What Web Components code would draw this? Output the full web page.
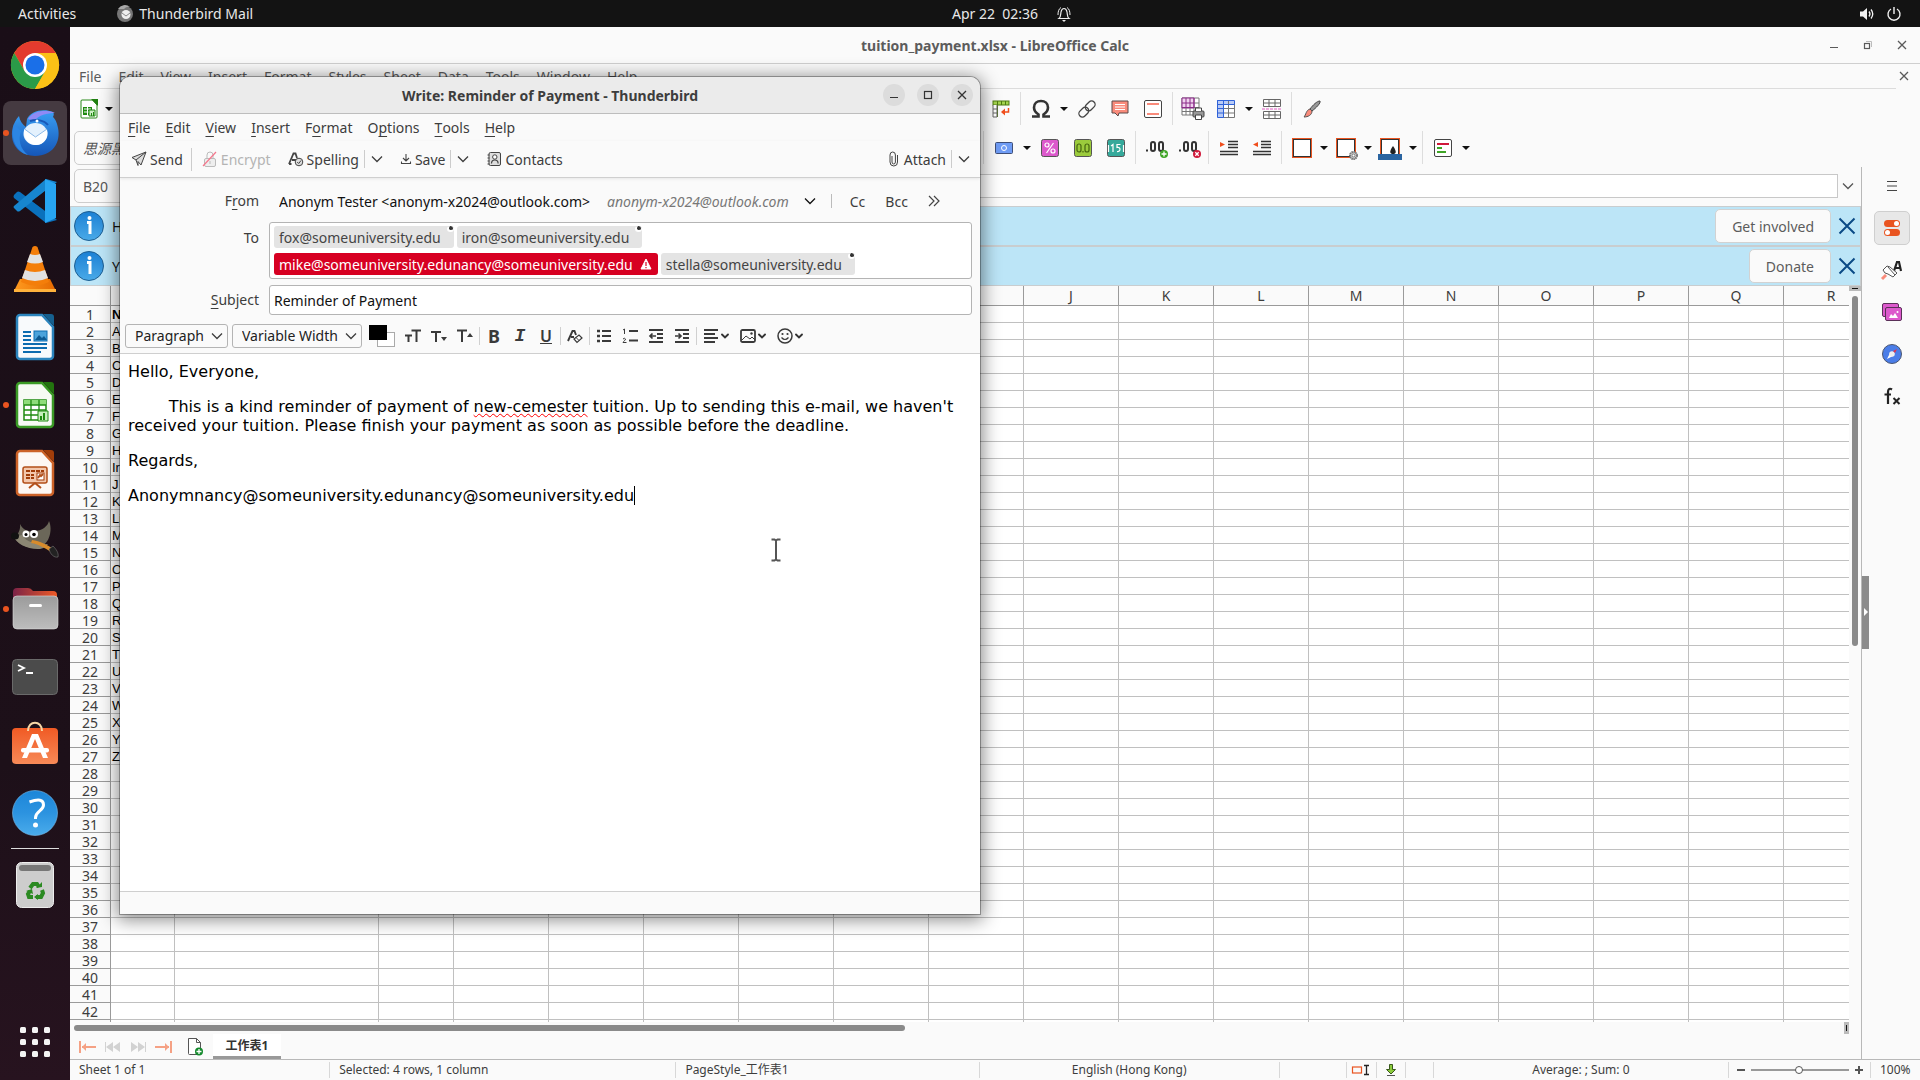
<!DOCTYPE html>
<html lang="en">
<head>
<meta charset="utf-8">
<title>Desktop</title>
<style>
  html, body {
    margin: 0;
    height: 100%;
  }
  body {
    font-family: "Noto Sans", "Noto Sans CJK TC", sans-serif;
    font-size: 14px;
    color: #3d3d3d;
    overflow: hidden;
  }
</style>
</head>
<body>
<desk-top></desk-top>

<script>
// icons: name -> [width, height, svg markup]
const ICONS = {
  // top bar
  tbsmall: [18, 18, `<circle cx="9" cy="9" r="8" fill="#777"/><path d="M2 4a8 8 0 0 1 12-2 6 6 0 0 0-6 2z" fill="#aaa"/><circle cx="10" cy="9.500" r="4.500" fill="#eee"/><path d="M6 8l4 3 4-3" fill="none" stroke="#888"/>`],
  bell: [16, 16, `<path d="M3 12.500c2-1.500 1.500-4 2-6.500C5.500 3.500 6.500 2.500 8 2.500s2.500 1 3 3.500c.5 2.500 0 5 2 6.500z" fill="none" stroke="#eee" stroke-width="1.200"/><path d="M2 9c0-3 .5-6 3-7.500M14 9c0-3-.5-6-3-7.500" fill="none" stroke="#eee"/><path d="M6 14h4l-2 2z" fill="#eee"/>`],
  sound: [16, 16, `<path d="M1 5.500h3L8 2v12l-4-3.500H1z" fill="#f2f2f2"/><path d="M10 5.500q2 2.500 0 5M12 3.500q3.500 4.500 0 9" fill="none" stroke="#f2f2f2" stroke-width="1.300"/>`],
  power: [16, 16, `<path d="M5 3a6 6 0 1 0 6 0M8 1v7" fill="none" stroke="#f2f2f2" stroke-width="1.400"/>`],

  // dock
  chrome: [48, 48, `<circle cx="24" cy="24" r="24" fill="#fbc116"/><path d="M3.200 12A24 24 0 0 1 44.800 12H24L13.600 30z" fill="#e33b2e"/><path d="M3.200 12a24 24 0 0 0 20.800 36L34.400 30 24 36 13.600 30z" fill="#2a9b48"/><path d="M24 12h20.800A24 24 0 0 1 24 48l10.400-18z" fill="#fbc116"/><circle cx="24" cy="24" r="12" fill="#fff"/><circle cx="24" cy="24" r="9.500" fill="#1a6fe8"/>`],
  thunderbird: [48, 48, `<defs><linearGradient id="tb" x1="0" y1="0" x2="0" y2="1"><stop offset="0" stop-color="#3aa0f5"/><stop offset="1" stop-color="#1556b8"/></linearGradient></defs><path d="M8 7C-4 20-2 46 24 47c18 0 26-14 23-28-1-6-3-9-5-11 1-2 1-4 0-5C32-1 20 2 16 10l-1 8c-4-3-6-6-7-11z" fill="url(#tb)"/><path d="M3 15c-4 14 2 28 14 31C9 40 7 30 10 22z" fill="#2c86e4"/><path d="M17 10C22 2 34 0 44 4 36 4 28 6 23 12z" fill="#8f8af5"/><path d="M19 12c6-2 14-1 18 4" stroke="#1858b8" fill="none" stroke-width="2"/><circle cx="26" cy="12" r="1.500" fill="#fff"/><ellipse cx="24.500" cy="25" rx="12" ry="11" fill="#e4f1fd"/><path d="M13 20l11 8 12-8c2 10-4 16-11 16S12 30 13 20z" fill="#fff"/><path d="M13.500 20l11 8 11.500-8" stroke="#8bb9e8" fill="none"/>`],
  vscode: [44, 44, `<path d="M1 16l3-3q1-1 3 0l37 28-11 3L1 19q-1-1 0-3z" fill="#0a71bd"/><path d="M1 29l3 3q1 1 3 0L44 3 33 0 1 27q-1 1 0 2z" fill="#1786cf"/><path d="M32 0l11 5v34l-11 5z" fill="#27a5f2"/><path d="M32 12v19L19 22z" fill="#1b0f18"/>`],
  vlc: [42, 46, `<defs><linearGradient id="v"><stop offset="0" stop-color="#ff9a1f"/><stop offset="1" stop-color="#e56a00"/></linearGradient></defs><path d="M6 33h30l6 12H0z" fill="url(#v)"/><path d="M0 43h42v3H0z" fill="#ffb23c"/><path d="M18.500 1q2.500-2 5 0L35 36q-14 7-28 0z" fill="#f47e0a"/><path d="M16 8q5 2 10 0l3 8q-8 3-16 0zM11 24q10 4 20 0l3 8q-13 6-26 0z" fill="#e2e2e2"/>`],
  writer: [38, 46, `<path d="M4 1h22l11 12v29a3 3 0 0 1-3 3H4a3 3 0 0 1-3-3V4a3 3 0 0 1 3-3z" fill="#f8fafc" stroke="#2b84bd" stroke-width="2.500"/><path d="M27 0h8a3 3 0 0 1 3 3v9z" fill="#16608f"/><path d="M7 18h8M7 22h8M7 26h8M7 30h24M7 34h24M7 38h18" stroke="#0d6cb0" stroke-width="2"/><rect x="18" y="17" width="13" height="10" fill="#4ba3db" stroke="#0d6cb0"/><path d="M19 26l4-5 3 3 2-2 3 4z" fill="#0d5a92"/>`],
  calc: [38, 46, `<path d="M4 1h22l11 12v29a3 3 0 0 1-3 3H4a3 3 0 0 1-3-3V4a3 3 0 0 1 3-3z" fill="#f6faf4" stroke="#3a9a25" stroke-width="2.500"/><path d="M27 0h8a3 3 0 0 1 3 3v9z" fill="#23740f"/><path d="M8 18h22v20H8z" fill="#fff" stroke="#1f8a10" stroke-width="1.500"/><path d="M8 18h22v5H8z" fill="#8fdc7a"/><path d="M8 23h22M8 28h22M8 33h22M15 18v20M23 18v20" stroke="#1f8a10" stroke-width="1.300"/><path d="M22 29h10v10H22z" fill="#c6efbb" stroke="#1f8a10"/><path d="M24 38v-4h2v4M27 38v-7h2v7" fill="#1f8a10"/>`],
  impress: [38, 46, `<path d="M4 1h22l11 12v29a3 3 0 0 1-3 3H4a3 3 0 0 1-3-3V4a3 3 0 0 1 3-3z" fill="#fdf7f3" stroke="#cc6228" stroke-width="2.500"/><path d="M27 0h8a3 3 0 0 1 3 3v9z" fill="#a13d0a"/><rect x="7" y="17" width="24" height="16" rx="2" fill="#f3c7ac" stroke="#b34f19" stroke-width="1.500"/><path d="M10 21h18M10 25h8M10 28h8" stroke="#a13d0a" stroke-width="2" stroke-dasharray="4 1"/><rect x="21" y="23" width="7" height="7" fill="#fff" stroke="#a13d0a"/><path d="M22 28l2-3 1 1 2-2M19 33l-6 5M19 33l6 5" stroke="#b34f19" fill="none" stroke-width="2"/>`],
  gimp: [48, 40, `<path d="M9 3c3 6 8 8 14 7 8 0 14-5 15-10 4 9 0 22-7 25-9 4-24 0-26-7 0-5 5-7 4-15z" fill="#6b6759"/><path d="M3 16c2 6 14 13 26 12 4-1 6-2 8-5-4 1-20 1-26-9z" fill="#8b8673"/><circle cx="15" cy="13" r="3.500" fill="#fff"/><circle cx="23" cy="13" r="4" fill="#fff"/><circle cx="15" cy="13.500" r="1.500"/><circle cx="23" cy="13.500" r="1.800"/><ellipse cx="4" cy="15" rx="4" ry="3.500" fill="#111"/><path d="M21 19c8 1 16 5 21 9l-2 3C34 27 27 23 20 22z" fill="#d78b2c"/><path d="M38 28l4-3c3 3 6 7 5 11-4 1-8-3-9-8z" fill="#222" stroke="#888" stroke-width=".5"/>`],
  files: [46, 42, `<defs><linearGradient id="f1"><stop offset="0" stop-color="#7b2347"/><stop offset="1" stop-color="#ee5a26"/></linearGradient><linearGradient id="f2" x2="0" y2="1"><stop offset="0" stop-color="#9b9b9b"/><stop offset="1" stop-color="#bdbdbd"/></linearGradient></defs><path d="M1 4a4 4 0 0 1 4-4h11q3 0 5 3h20a4 4 0 0 1 4 4v12H1z" fill="url(#f1)"/><rect x="1" y="8" width="45" height="33" rx="4" fill="url(#f2)" stroke="#ddd" stroke-width=".6"/><rect x="17" y="16" width="13" height="3" rx="1.500" fill="#fff"/>`],
  terminal: [46, 36, `<rect x=".5" y=".5" width="45" height="35" rx="4" fill="#4b4b4b" stroke="#6a6a6a"/><path d="M6 6l6 3-6 3" stroke="#fff" stroke-width="1.800" fill="none"/><path d="M14 14h7" stroke="#fff" stroke-width="2"/>`],
  software: [46, 44, `<defs><linearGradient id="s" x2="0" y2="1"><stop offset="0" stop-color="#f05a24"/><stop offset="1" stop-color="#f78a58"/></linearGradient></defs><rect y="5" width="46" height="36" rx="4" fill="url(#s)"/><path d="M16 8c0-11 14-11 14 0" stroke="#f7d7a6" stroke-width="2" fill="none"/><path d="M20 11h6l10 24h-5L23 16l-8 19h-5z" fill="#fff"/><rect x="9" y="25" width="28" height="4.500" rx="2" fill="#fff"/>`],
  help: [46, 46, `<defs><linearGradient id="h" x2="0" y2="1"><stop offset="0" stop-color="#1c86d8"/><stop offset=".5" stop-color="#2c93e0"/><stop offset="1" stop-color="#4aaceb"/></linearGradient></defs><circle cx="23" cy="23" r="22.500" fill="url(#h)" stroke="#7bc0f0" stroke-width=".6"/><path d="M17.500 12q14-5 14 3c0 6-8 6-8 13v1" fill="none" stroke="#fff" stroke-width="3"/><circle cx="23.500" cy="35" r="2.500" fill="#fff"/>`],
  trash: [38, 46, `<rect x=".5" y=".5" width="37" height="45" rx="5" fill="#cdcdcd" stroke="#eee"/><rect x="3" y="3" width="32" height="6" rx="3" fill="#777"/><g fill="none" stroke="#2b8a22" stroke-width="4"><path d="M14 26l3-4h4l2 3"/><path d="M26 28l1 3-2 4h-5"/><path d="M17 35h-4l-1-3 2-3"/></g><path d="M20 26l6-1v-5zM22 32v6l-4-3zM10 29l6-2 1 5z" fill="#2b8a22"/>`],
  apps: [32, 32, `<g fill="#f4f4f4"><rect x="1" y="1" width="6" height="6" rx="1.500"/><rect x="13" y="1" width="6" height="6" rx="1.500"/><rect x="25" y="1" width="6" height="6" rx="1.500"/><rect x="1" y="13" width="6" height="6" rx="1.500"/><rect x="13" y="13" width="6" height="6" rx="1.500"/><rect x="25" y="13" width="6" height="6" rx="1.500"/><rect x="1" y="25" width="6" height="6" rx="1.500"/><rect x="13" y="25" width="6" height="6" rx="1.500"/><rect x="25" y="25" width="6" height="6" rx="1.500"/></g>`],

  // window buttons
  min: [10, 10, `<path d="M1 7.500h8" stroke="currentColor"/>`],
  max: [10, 10, `<rect x="1.500" y="1.500" width="7" height="7" fill="none" stroke="currentColor" stroke-width="1.200"/>`],
  restore: [10, 10, `<path d="M3 1.500h5.500V7" fill="none" stroke="#bbb"/><rect x="1.500" y="3.500" width="5" height="5" fill="none" stroke="currentColor" stroke-width="1.200"/>`],
  close: [10, 10, `<path d="M1 1l8 8M9 1L1 9" stroke="currentColor" stroke-width="1.300"/>`],
  chev: [12, 8, `<path d="M1 1.500l5 5 5-5" fill="none" stroke="currentColor" stroke-width="1.300"/>`],
  chevbold: [8, 8, `<path d="M1 2.500l3 3 3-3" fill="none" stroke="#333" stroke-width="1.900" stroke-linecap="round"/>`],
  drop: [8, 4, `<path d="M0 0h8L4 4z" fill="#111"/>`],
  more: [12, 12, `<path d="M1 1l5 5-5 5M6 1l5 5-5 5" fill="none" stroke="#444" stroke-width="1.200"/>`],

  // calc toolbar
  sheet: [18, 20, `<path d="M1.500 1h11L17 6v12a1 1 0 0 1-1 1H2a1 1 0 0 1-1-1V2z" fill="#fff" stroke="#2a8a1a"/><path d="M11 0h7v7z" fill="#1f7f10"/><path d="M3 8h9v8H3z" fill="#1f8a10"/><path d="M4 10h7M4 13h7M7.500 8v8" stroke="#fff"/><path d="M9 11h6v6H9z" fill="#cdeec5" stroke="#1f8a10"/><path d="M11.500 17v-3M13.500 17v-4" stroke="#1f8a10"/>`],
  pivot: [18, 18, `<rect x="1" y="1" width="16" height="4" fill="#a4d44e" stroke="#4e7a10"/><path d="M5.500 1v16M9.500 1v4M13.500 1v4" stroke="#4e7a10"/><path d="M1 5v12h4V5M1 9h4M1 13h4" fill="#fff" stroke="#666"/><path d="M16.500 8v4H11" stroke="#f04e1c" stroke-width="1.500" fill="none"/><path d="M9 12l4-3.500v7z" fill="#f04e1c"/>`],
  omega: [20, 20, `<path d="M1 17.500h6.500v-2C4.500 13.500 3 11 3 8.500c0-4 3-6.500 7-6.500s7 2.500 7 6.500c0 2.500-1.500 5-4.500 7v2H19" fill="none" stroke="#333" stroke-width="2.600"/>`],
  link: [18, 18, `<g fill="none" stroke="#444" stroke-width="1.300" transform="rotate(-45 9 9)"><rect x="-1" y="5.500" width="11" height="7" rx="3.500"/><rect x="8" y="5.500" width="11" height="7" rx="3.500"/></g>`],
  comment: [18, 17, `<path d="M1 1h16v12H8l-1 3-3-3H1z" fill="#f98b7b" stroke="#5a4a4a"/><path d="M4 4.500h10M4 7h10M4 9.500h10" stroke="#fff"/>`],
  headfoot: [18, 18, `<rect x=".5" y=".5" width="17" height="17" rx="1.500" fill="#fff" stroke="#444"/><path d="M3 4h12M3 14h12" stroke="#f98b7b" stroke-width="2"/>`],
  printrange: [23, 23, `<path d="M1 1h17v17H1z" fill="#fff" stroke="#777"/><path d="M1 1h12v10H1z" fill="#efd3ee" stroke="#8a2b88"/><path d="M13 6h5M13 10.500h5M1 14.500h17M5 11v7M9 11v7M13 11v7" stroke="#777"/><path d="M1 6h12M1 10.500h12M5 1v10M9 1v10M13 1v10" stroke="#8a2b88"/><rect x="12" y="14" width="11" height="6" rx="1" fill="#999" stroke="#444"/><path d="M14.500 14v-3h6v3M14.500 18h6v4.500h-6z" fill="#fff" stroke="#444"/>`],
  freeze: [18, 18, `<path d="M.5.500h17v17H.5z" fill="#fff"/><path d="M.5.500h17v4H.5zM.5.500h6v17h-6z" fill="#b9cbf6"/><path d="M6.500 4.500v13M11.500.500v17M6.500 8.500h11M6.500 13h11M17.500 4v13.500h-11" fill="none" stroke="#777"/><path d="M.5.500h17v4H.5zM.5.500h6v17h-6zM.5 8.500h6M.5 13h6" fill="none" stroke="#2f62d8"/>`],
  split: [20, 20, `<path d="M1.500.500h17v7h-17zM1.500 4h17M7 .500v7M13 .500v7M1.500 12.500h17v7h-17zM1.500 16h17M7 12.500v7M13 12.500v7" fill="#fff" stroke="#666"/><path d="M0 10h20" stroke="#e25bc6" stroke-dasharray="3 1"/>`],
  brush: [18, 18, `<path d="M7 9c3-4 7-8 10-8 1 2-4 7-8 10z" fill="#999" stroke="#444"/><path d="M7 9l2 2c0 4-4 6-8 6 2-2 2-7 6-8z" fill="#f98b7b" stroke="#555"/>`],
  money: [18, 12, `<rect x=".5" y=".5" width="17" height="11" rx="1" fill="#6f9cf5" stroke="#3f4f78"/><circle cx="9" cy="6" r="2.500" fill="none" stroke="#fff"/>`],
  percent: [18, 18, `<rect x=".5" y=".5" width="17" height="17" rx="2" fill="#dc59cc" stroke="#555"/><circle cx="6" cy="6" r="2" fill="none" stroke="#fff" stroke-width="1.200"/><circle cx="12" cy="12" r="2" fill="none" stroke="#fff" stroke-width="1.200"/><path d="M12.500 4l-7 10" stroke="#fff" stroke-width="1.200"/>`],
  number: [18, 18, `<rect x=".5" y=".5" width="17" height="17" rx="2" fill="#9bcb3c" stroke="#555"/><g fill="none" stroke="#46660f" stroke-width="1.200"><rect x="3" y="5" width="4" height="8" rx="2"/><rect x="11" y="5" width="4" height="8" rx="2"/><path d="M9 12v1.500"/></g>`],
  date: [18, 18, `<rect x=".5" y=".5" width="17" height="17" rx="2" fill="#35a99b" stroke="#555"/><path d="M1.500 6v7M16.500 6v7M4 7l2-1.500V13M13.500 5.500H10v3c4-1 4 4.500 0 4" fill="none" stroke="#fff" stroke-width="1.200"/>`],
  decadd: [22, 20, `<g fill="none" stroke="#333" stroke-width="2"><rect x="6" y="4" width="4" height="9" rx="2"/><rect x="14" y="4" width="4" height="9" rx="2"/><path d="M1 12.500h2"/></g><circle cx="19" cy="16" r="4" fill="#3fa526"/><path d="M19 13.500v5M16.500 16h5" stroke="#fff" stroke-width="1.300"/>`],
  decdel: [22, 20, `<g fill="none" stroke="#333" stroke-width="2"><rect x="6" y="4" width="4" height="9" rx="2"/><rect x="14" y="4" width="4" height="9" rx="2"/><path d="M1 12.500h2"/></g><circle cx="19" cy="16" r="4" fill="#d0193a"/><path d="M17.300 14.300l3.400 3.400M20.700 14.300l-3.400 3.400" stroke="#fff" stroke-width="1.300"/>`],
  indent: [18, 16, `<path d="M8 1.500h10M8 4.500h10M8 7.500h10M0 11.500h18M0 14.500h18" stroke="#333" stroke-width="1.300"/><path d="M0 2l5 2.500L0 7z" fill="#f04e1c"/>`],
  outdent: [18, 16, `<path d="M8 1.500h10M8 4.500h10M8 7.500h10M0 11.500h18M0 14.500h18" stroke="#333" stroke-width="1.300"/><path d="M5 2L0 4.500 5 7z" fill="#f04e1c"/>`],
  border: [20, 20, `<rect x=".5" y=".5" width="19" height="19" fill="#fff" stroke="#e95420"/><rect x="1.500" y="1.500" width="17" height="17" fill="none" stroke="#333"/>`],
  borderstyle: [20, 20, `<rect x=".5" y=".5" width="19" height="19" fill="#fff" stroke="#e95420"/><rect x="1.500" y="1.500" width="17" height="17" fill="none" stroke="#333"/><circle cx="17.500" cy="17.500" r="3.500" fill="#ddd" stroke="#777" stroke-width="2" stroke-dasharray="1.500 .5"/><circle cx="17.500" cy="17.500" r="1.500" fill="#fff" stroke="#777"/>`],
  bordercolor: [24, 20, `<rect x="2.500" y=".5" width="19" height="19" fill="#fff" stroke="#e95420"/><rect x="3.500" y="1.500" width="17" height="17" fill="none" stroke="#333"/><path d="M15 8c5 7 2 8 0 8s-5-1 0-8z" fill="#222"/><path d="M0 16h24v6H0z" fill="#2a64a0"/>`],
  cond: [18, 18, `<rect x=".5" y=".5" width="17" height="17" rx="1.500" fill="#fff" stroke="#444"/><path d="M3 5h12" stroke="#d0193a" stroke-width="2"/><path d="M3 9h5M3 13h9" stroke="#3fa526" stroke-width="2"/>`],
  info: [30, 30, `<defs><linearGradient id="i" x2="0" y2="1"><stop offset="0" stop-color="#1c80d4"/><stop offset="1" stop-color="#4aaae8"/></linearGradient></defs><circle cx="15" cy="15" r="14.500" fill="url(#i)" stroke="#1f5f92"/><circle cx="15.500" cy="7" r="2" fill="#fff"/><path d="M13 11.500h3V23" fill="none" stroke="#fff" stroke-width="3"/>`],
  bigclose: [16, 16, `<path d="M.5.500l15 15M15.500.500l-15 15" stroke="#0b4a86" stroke-width="2"/>`],

  // calc sidebar
  burger: [10, 10, `<path d="M0 .5h10M0 5h10M0 9.500h10" stroke="#444"/>`],
  props: [16, 16, `<rect width="16" height="7" rx="3.500" fill="#e95420"/><circle cx="12.500" cy="3.500" r="2.500" fill="#fff"/><rect y="9" width="16" height="7" rx="3.500" fill="#e95420"/><circle cx="3.500" cy="12.500" r="2.500" fill="#fff"/>`],
  styles: [20, 20, `<path d="M12 11l3-9h2l2 9M13 8h6" stroke="#222" stroke-width="2.200" fill="none"/><path d="M1 10l4-4 3 1 7 6-4 4-5-3-3-1z" fill="#fff" stroke="#555"/><path d="M6 7l7 8" stroke="#555"/><path d="M0 19l4-4" stroke="#f98b7b" stroke-width="3"/>`],
  gallery: [20, 18, `<rect x=".5" y=".5" width="16" height="13" rx="1.500" fill="#dc59cc" stroke="#5a3058"/><rect x="3.500" y="4.500" width="16" height="13" rx="1.500" fill="#dc59cc" stroke="#5a3058"/><path d="M7 15l2-4 2 2 2-3 3 5z" fill="#fff"/><circle cx="15.500" cy="9" r="1" fill="#fff"/>`],
  nav: [20, 20, `<circle cx="10" cy="10" r="9.500" fill="#4a7de8" stroke="#4a5570"/><path d="M5 15l3-6 3 3z" fill="#fff"/><circle cx="10" cy="10" r="2.800" fill="#eee"/><path d="M11 7l4-2-2 4z" fill="#e0344c"/>`],
  fx: [18, 18, `<path d="M9 2.500C6 .500 5 3 5 5v12M1.500 7.500H8" fill="none" stroke="#222" stroke-width="2.200"/><path d="M10.500 11l6 6M16.500 11l-6 6" stroke="#222" stroke-width="2"/>`],

  // sheet tabs
  first: [17, 12, `<path d="M1 0v12M3 6h14" stroke="#f5a184" stroke-width="2"/><path d="M3 6l4-4v8z" fill="#f5a184"/>`],
  last: [17, 12, `<path d="M16 0v12M0 6h14" stroke="#f5a184" stroke-width="2"/><path d="M14 6l-4-4v8z" fill="#f5a184"/>`],
  prev: [16, 10, `<path d="M.5 0v10" stroke="#d2d2d2"/><path d="M8 0v10L1 5zM15 0v10L8 5z" fill="#d2d2d2"/>`],
  next: [16, 10, `<path d="M15.500 0v10" stroke="#d2d2d2"/><path d="M1 0v10l7-5zM8 0v10l7-5z" fill="#d2d2d2"/>`],
  addsheet: [16, 18, `<path d="M1.500.500h8l4 4v12h-11a1 1 0 0 1-1-1z" fill="#fff" stroke="#555"/><path d="M9.500.500v4h4" fill="none" stroke="#555"/><circle cx="12" cy="13.500" r="4" fill="#148a2c"/><path d="M12 11v5M9.500 13.500h5" stroke="#fff" stroke-width="1.300"/>`],

  // status bar
  selmode: [18, 10, `<rect x=".5" y="2" width="9" height="6" fill="none" stroke="#e95420" stroke-width="1.200"/><path d="M12 .500h5M12 9.500h5M14.500 0v10" stroke="#222" stroke-width="1.300"/>`],
  saved: [10, 12, `<path d="M3.500.500h3v5h3L5 10 .500 5.500h3z" fill="#8bcb3c" stroke="#39591a"/><path d="M1 11.500h8" stroke="#555"/>`],
  minus: [8, 8, `<path d="M0 4h8" stroke="#555" stroke-width="2"/>`],
  plus: [8, 8, `<path d="M0 4h8M4 0v8" stroke="#555" stroke-width="2"/>`],

  // compose toolbar
  send: [16, 16, `<path d="M15 1L1 6.500l4 2.500L15 1l-5 13-3-3.500v4L5 9" fill="#ddd" stroke="#444" stroke-linejoin="round"/>`],
  encrypt: [16, 16, `<rect x="2.500" y="7.500" width="11" height="8" rx="1.500" fill="#eee" stroke="#bbb"/><path d="M5 7V4a3 3 0 0 1 6 0v3" fill="none" stroke="#bbb"/><path d="M8 10v3" stroke="#bbb"/><path d="M1 15L14 1" stroke="#f5778c" stroke-width="1.200"/>`],
  spell: [16, 16, `<path d="M1 13L5.500 2.500h2L9 7M4 9h4M1 13h2.500" fill="none" stroke="#444" stroke-width="1.800"/><circle cx="11" cy="11" r="3.800" fill="#ddd" stroke="#444"/><path d="M9.200 11l1.500 1.500 2.300-3" fill="none" stroke="#444"/>`],
  save: [12, 14, `<path d="M6 2v7M3 6l3 3 3-3M1.500 9.500v2h9v-2" fill="none" stroke="#444" stroke-width="1.100"/>`],
  contacts: [16, 16, `<rect x="3" y="1.500" width="11.500" height="13" rx="1.500" fill="#ddd" stroke="#444"/><circle cx="8.800" cy="6" r="2.200" fill="#fff" stroke="#444"/><path d="M5.500 12.500q0-3.500 3.300-3.500t3.300 3.500" fill="none" stroke="#444" stroke-width="1.200"/><path d="M1.500 4h2M1.500 7h2M1.500 10h2M1.500 13h2" stroke="#444"/>`],
  attach: [10, 16, `<path d="M3 5v6q0 2 1.700 2t1.700-2V4q0-3-2.700-3T1 4v7q0 4 3.800 4t3.700-4V4" fill="none" stroke="#444"/>`],
  warn: [12, 12, `<path d="M6 1l5 10H1z" fill="#fff" stroke="#fff" stroke-linejoin="round"/><path d="M6 4v4M6 9v1.300" stroke="#d70022" stroke-width="1.200"/>`],
  sizett: [16, 16, `<path d="M6.500 2.500H16M11.500 2.500V14M0 7.500h7M3.500 7.500V14" fill="none" stroke="#3a3a3a" stroke-width="2"/>`],
  smaller: [16, 16, `<path d="M0 4h10M5 4v10" fill="none" stroke="#3a3a3a" stroke-width="2"/><path d="M10 9h6l-3 4z" fill="#3a3a3a"/>`],
  larger: [16, 16, `<path d="M0 2.500h10M5 2.500V14" fill="none" stroke="#3a3a3a" stroke-width="2"/><path d="M10 9h6l-3-4z" fill="#3a3a3a"/>`],
  clearfmt: [16, 16, `<path d="M1 13L5.500 3h2L9 7M4 9h3" fill="none" stroke="#3a3a3a" stroke-width="1.900"/><path d="M7 11l5-4 3 3-5 4.500z" fill="#fff" stroke="#3a3a3a" stroke-width="1.200"/><path d="M9 9.500l3 3" stroke="#3a3a3a"/>`],
  ul: [14, 14, `<path d="M0 2h3M0 7h3M0 12h3" stroke="#3a3a3a" stroke-width="2.500"/><path d="M5 2h9M5 7h9M5 12h9" stroke="#3a3a3a" stroke-width="2"/>`],
  ol: [16, 16, `<path d="M7 3h9M7 12.500h9" stroke="#3a3a3a" stroke-width="2"/><path d="M1 2l1.500-1v5M1 11q1.500-1.500 2.500 0c0 1.500-2 2-2.500 3.500h3.500" fill="none" stroke="#3a3a3a"/>`],
  fout: [14, 14, `<path d="M0 1h14M8 5h6M8 9h6M0 13h14" stroke="#3a3a3a" stroke-width="2"/><path d="M1 7h6M3.500 4.500L1 7l2.500 2.500" fill="none" stroke="#3a3a3a" stroke-width="1.700"/>`],
  fin: [14, 14, `<path d="M0 1h14M8 5h6M8 9h6M0 13h14" stroke="#3a3a3a" stroke-width="2"/><path d="M0 7h6M3.500 4.500L6 7 3.500 9.500" fill="none" stroke="#3a3a3a" stroke-width="1.700"/>`],
  align: [14, 14, `<path d="M0 1h14M0 5h11M0 9h14M0 13h11" stroke="#3a3a3a" stroke-width="2"/>`],
  image: [16, 14, `<rect x="1" y="1" width="14" height="12" rx="1.500" fill="none" stroke="#3a3a3a" stroke-width="1.800"/><path d="M2 11l4-4 4 3 2-2 3 3" fill="none" stroke="#3a3a3a"/><circle cx="11.500" cy="4.500" r="1.200" fill="#3a3a3a"/>`],
  smile: [16, 16, `<circle cx="8" cy="8" r="7" fill="none" stroke="#3a3a3a" stroke-width="1.500"/><circle cx="5.500" cy="6" r="1.100" fill="#3a3a3a"/><circle cx="10.500" cy="6" r="1.100" fill="#3a3a3a"/><path d="M4.500 9.500q3.500 4 7 0" fill="none" stroke="#3a3a3a" stroke-width="1.200"/>`],
  ibeam: [12, 26, `<path d="M1.500 2.500h3l1.500 1 1.500-1h3M6 3.500v19M1.500 23.500h3l1.500-1 1.500 1h3" fill="none" stroke="#fff" stroke-width="4"/><path d="M1.500 2.500h3l1.500 1 1.500-1h3M6 3.500v19M1.500 23.500h3l1.500-1 1.500 1h3" fill="none" stroke="#555" stroke-width="2"/>`]
};

// small helper, every element renders once into an open root
function shadow(el, html) {
  el.attachShadow({ mode: 'open' }).innerHTML = html;
}

class UiIcon extends HTMLElement {
  constructor() {
    super();
    this.attachShadow({ mode: 'open' });
  }

  connectedCallback() {
    const [w, h, body] = ICONS[this.getAttribute('name')];
    this.shadowRoot.innerHTML = `
      <style>
        :host { display: inline-flex; flex: none; }
        svg { display: block; overflow: visible; }
      </style>
      <svg width="${w}" height="${h}" viewBox="0 0 ${w} ${h}" aria-hidden="true">${body}</svg>
    `;
  }
}
customElements.define('ui-icon', UiIcon);

class TopPanel extends HTMLElement {
  constructor() {
    super();
    shadow(this, `
      <style>
        :host {
          display: grid;
          grid-template-columns: 1fr auto 1fr;
          align-items: center;
          height: 27px;
          background: #131313;
          color: #e8e8e8;
        }
        div { display: flex; align-items: center; }
        button {
          font: inherit;
          color: inherit;
          background: none;
          border: 0;
          padding: 0;
          display: flex;
          align-items: center;
          gap: 5px;
          white-space: pre;
        }
        .left { padding-left: 18px; gap: 40px; }
        .mid { gap: 18px; padding-left: 104px; }
        .right { justify-content: flex-end; gap: 11px; padding-right: 18px; }
      </style>
      <div class="left">
        <button>Activities</button>
        <button><ui-icon name="tbsmall"></ui-icon>Thunderbird Mail</button>
      </div>
      <div class="mid"><button>Apr 22  02:36</button><ui-icon name="bell"></ui-icon></div>
      <div class="right"><ui-icon name="sound"></ui-icon><ui-icon name="power"></ui-icon></div>
    `);
  }
}
customElements.define('top-panel', TopPanel);

class DockItem extends HTMLElement {
  connectedCallback() {
    shadow(this, `
      <style>
        :host { display: flex; }
        button {
          position: relative;
          flex: 1;
          height: 64px;
          margin: 0 3px;
          padding: 0;
          border: 0;
          border-radius: 8px;
          background: none;
          display: grid;
          place-items: center;
        }
        :host([active]) button { background: #453a41; }
        :host([running]) button::before {
          content: "";
          position: absolute;
          left: 0;
          top: 29px;
          width: 6px;
          height: 6px;
          border-radius: 50%;
          background: #e95420;
        }
      </style>
      <button aria-label="${this.getAttribute('label')}"><ui-icon name="${this.getAttribute('icon')}"></ui-icon></button>
    `);
  }
}
customElements.define('dock-item', DockItem);

class AppDock extends HTMLElement {
  constructor() {
    super();
    shadow(this, `
      <style>
        :host {
          display: flex;
          flex-direction: column;
          gap: 4px;
          padding: 6px 0;
          background: linear-gradient(#1a0e17, #1d1019 70%, #27131f);
        }
        hr { width: 48px; height: 1px; margin: -1px auto 0; border: 0; background: #ddd; }
        dock-item:last-child { margin-top: auto; }
      </style>
      <dock-item icon="chrome" label="Google Chrome"></dock-item>
      <dock-item icon="thunderbird" label="Thunderbird Mail" active running></dock-item>
      <dock-item icon="vscode" label="Visual Studio Code"></dock-item>
      <dock-item icon="vlc" label="VLC"></dock-item>
      <dock-item icon="writer" label="LibreOffice Writer"></dock-item>
      <dock-item icon="calc" label="LibreOffice Calc" running></dock-item>
      <dock-item icon="impress" label="LibreOffice Impress"></dock-item>
      <dock-item icon="gimp" label="GIMP"></dock-item>
      <dock-item icon="files" label="Files" running></dock-item>
      <dock-item icon="terminal" label="Terminal"></dock-item>
      <dock-item icon="software" label="Software"></dock-item>
      <dock-item icon="help" label="Help"></dock-item>
      <hr>
      <dock-item icon="trash" label="Trash"></dock-item>
      <dock-item icon="apps" label="Show Applications"></dock-item>
    `);
  }
}
customElements.define('app-dock', AppDock);

// one row of calc tool buttons: "-" is a separator, "v" a drop arrow, "n" a narrow one
class ToolRow extends HTMLElement {
  connectedCallback() {
    const items = this.getAttribute('items').split(' ').map(name => {
      if (name === '-') return '<i class="sep"></i>';
      if (name === 'v' || name === 'n') return `<button class="${name}" aria-label="More"><ui-icon name="drop"></ui-icon></button>`;
      return `<button aria-label="${name}"><ui-icon name="${name}"></ui-icon></button>`;
    }).join('');
    shadow(this, `
      <style>
        :host { display: flex; align-items: center; height: 39px; padding-left: 2px; }
        .lead { flex: 0 0 auto; display: flex; align-items: center; width: 912px; }
        :host([second]) .lead { width: 908px; }
        button {
          width: 33px;
          height: 34px;
          padding: 0;
          border: 0;
          background: none;
          display: grid;
          place-items: center;
        }
        .v { width: 13px; }
        .n { width: 11px; }
        .sep { width: 7px; height: 33px; background: linear-gradient(#ddd, #ddd) 3px 0 / 1px 100% no-repeat; }
      </style>
      <div class="lead"><slot></slot></div>
      ${items}
    `);
  }
}
customElements.define('tool-row', ToolRow);

class InfoBar extends HTMLElement {
  connectedCallback() {
    shadow(this, `
      <style>
        :host {
          display: flex;
          align-items: center;
          box-sizing: border-box;
          height: 40px;
          padding: 0 5px 0 3px;
          border: 1px solid #c9cdcf;
          background: #bce5f7;
          color: #111;
          gap: 8px;
        }
        .text { flex: 1; }
        button { font: inherit; color: #5c5c5c; }
        .action {
          height: 34px;
          padding: 0 16px;
          border: 1px solid #d2d2d2;
          border-radius: 5px;
          background: #fafafa;
        }
        .x { padding: 0; border: 0; background: none; display: flex; }
      </style>
      <ui-icon name="info"></ui-icon>
      <span class="text"><slot></slot></span>
      <button class="action">${this.getAttribute('action')}</button>
      <button class="x" aria-label="Close"><ui-icon name="bigclose"></ui-icon></button>
    `);
  }
}
customElements.define('info-bar', InfoBar);

const COLUMNS = [64, 204, 75, 95, 95, 95, 95, 95, 95, 95, 95, 95, 95, 95, 95, 95, 95, 95];
const FIRST_CELLS = ['N', 'A', 'B', 'C', 'D', 'E', 'F', 'G', 'H', 'Ir', 'J', 'K', 'Li', 'M', 'N', 'O', 'P', 'Q', 'R', 'S', 'T', 'U', 'V', 'W', 'X', 'Y', 'Z'];

class SheetGrid extends HTMLElement {
  constructor() {
    super();
    const cols = COLUMNS.map(w => `<col style="width:${w}px">`).join('');
    const heads = COLUMNS.map((w, i) => `<th>${String.fromCharCode(65 + i)}</th>`).join('');
    let rows = '';
    for (let r = 1; r <= 43; r++) {
      rows += `<tr><th>${r < 43 ? r : ''}</th><td>${FIRST_CELLS[r - 1] || ''}</td>${'<td></td>'.repeat(COLUMNS.length - 1)}</tr>`;
    }
    shadow(this, `
      <style>
        :host { display: block; overflow: hidden; background: #fff; min-width: 0; min-height: 0; }
        table { table-layout: fixed; width: 1809px; border-collapse: separate; border-spacing: 0; }
        th, td {
          box-sizing: border-box;
          height: 17px;
          padding: 2px 0 0;
          line-height: 14px;
          border-right: 1px solid #c0c0c0;
          border-bottom: 1px solid #c0c0c0;
        }
        th { font-weight: 400; background: #fafafa; border-color: #9a9a9a; }
        thead th { height: 20px; padding: 0; }
        td { font-family: "Liberation Sans", sans-serif; font-size: 13px; color: #000; padding-left: 1px; }
        tbody tr:first-child td { font-weight: 700; }
      </style>
      <table>
        <colgroup><col style="width:41px">${cols}</colgroup>
        <thead><tr><th></th>${heads}</tr></thead>
        <tbody>${rows}</tbody>
      </table>
    `);
  }
}
customElements.define('sheet-grid', SheetGrid);

class SideDeck extends HTMLElement {
  constructor() {
    super();
    shadow(this, `
      <style>
        :host {
          display: flex;
          flex-direction: column;
          align-items: center;
          gap: 8px;
          padding-top: 2px;
          border-left: 1px solid #b8b8b8;
          position: relative;
        }
        button {
          box-sizing: border-box;
          width: 36px;
          height: 34px;
          padding: 0;
          border: 1px solid transparent;
          border-radius: 5px;
          background: none;
          display: grid;
          place-items: center;
          margin-left: 2px;
        }
        button:first-child { margin-bottom: 6px; }
        button.on { background: #e8e8e8; border-color: #cfcfcf; }
        .grip {
          position: absolute;
          left: 0;
          top: 409px;
          width: 7px;
          height: 73px;
          background: #8c8c8c;
        }
        .grip::after {
          content: "";
          position: absolute;
          left: 2px;
          top: 32px;
          border: 4px solid transparent;
          border-left-color: #fff;
          border-right: 0;
        }
      </style>
      <button aria-label="Sidebar Settings"><ui-icon name="burger"></ui-icon></button>
      <button class="on" aria-label="Properties"><ui-icon name="props"></ui-icon></button>
      <button aria-label="Styles"><ui-icon name="styles"></ui-icon></button>
      <button aria-label="Gallery"><ui-icon name="gallery"></ui-icon></button>
      <button aria-label="Navigator"><ui-icon name="nav"></ui-icon></button>
      <button aria-label="Functions"><ui-icon name="fx"></ui-icon></button>
      <div class="grip"></div>
    `);
  }
}
customElements.define('side-deck', SideDeck);

class SheetTabs extends HTMLElement {
  constructor() {
    super();
    shadow(this, `
      <style>
        :host { display: flex; align-items: stretch; height: 25px; padding-left: 9px; }
        button {
          padding: 0;
          border: 0;
          background: none;
          display: flex;
          align-items: center;
          margin-right: 9px;
          font: inherit;
        }
        .add { margin: 0 10px 0 6px; }
        .tab {
          width: 68px;
          margin: 0;
          justify-content: center;
          background: #fff;
          border-bottom: 3px solid #999;
          font-size: 12px;
          font-weight: 700;
          color: #333;
        }
      </style>
      <button aria-label="First sheet"><ui-icon name="first"></ui-icon></button>
      <button aria-label="Previous sheet"><ui-icon name="prev"></ui-icon></button>
      <button aria-label="Next sheet"><ui-icon name="next"></ui-icon></button>
      <button aria-label="Last sheet"><ui-icon name="last"></ui-icon></button>
      <button class="add" aria-label="Add sheet"><ui-icon name="addsheet"></ui-icon></button>
      <button class="tab">工作表1</button>
    `);
  }
}
customElements.define('sheet-tabs', SheetTabs);

class CalcStatus extends HTMLElement {
  constructor() {
    super();
    shadow(this, `
      <style>
        :host {
          display: grid;
          grid-template-columns: 260fr 346fr 303fr 300fr 67fr 30px 29px 28px 295fr 142px 49px;
          align-items: center;
          height: 20px;
          border-top: 1px solid #b8b8b8;
          font-size: 12px;
          line-height: 16px;
        }
        div {
          height: 16px;
          display: flex;
          align-items: center;
          padding-left: 9px;
          border-right: 1px solid #d8d8d8;
          white-space: nowrap;
        }
        div:last-child { border: 0; }
        .c { justify-content: center; padding: 0; }
        .zoom { gap: 6px; justify-content: center; padding: 0; }
        input {
          appearance: none;
          width: 98px;
          height: 14px;
          margin: 0;
          background: linear-gradient(#999, #999) 0 6px / 100% 2px no-repeat;
        }
        input::-webkit-slider-thumb {
          appearance: none;
          box-sizing: border-box;
          width: 8px;
          height: 8px;
          border: 1px solid #555;
          border-radius: 50%;
          background: #fff;
        }
      </style>
      <div>Sheet 1 of 1</div>
      <div>Selected: 4 rows, 1 column</div>
      <div>PageStyle_工作表1</div>
      <div class="c">English (Hong Kong)</div>
      <div></div>
      <div class="c"><ui-icon name="selmode"></ui-icon></div>
      <div class="c"><ui-icon name="saved"></ui-icon></div>
      <div></div>
      <div class="c">Average: ; Sum: 0</div>
      <div class="zoom"><ui-icon name="minus"></ui-icon><input type="range" aria-label="Zoom" min="0" max="100" value="49"><ui-icon name="plus"></ui-icon></div>
      <div>100%</div>
    `);
  }
}
customElements.define('calc-status', CalcStatus);

class CalcWindow extends HTMLElement {
  constructor() {
    super();
    const menus = ['File', 'Edit', 'View', 'Insert', 'Format', 'Styles', 'Sheet', 'Data', 'Tools', 'Window', 'Help'];
    shadow(this, `
      <style>
        :host { display: flex; flex-direction: column; background: #fafafa; min-width: 0; min-height: 0; }
        button { display: flex; font: inherit; color: #5a5a5a; background: none; border: 0; padding: 0; }
        .title {
          display: grid;
          grid-template-columns: 1fr auto 1fr;
          align-items: center;
          height: 36px;
          border-bottom: 1px solid #cfcfcf;
          font-weight: 700;
          color: #5c5c5c;
        }
        .title span { grid-column: 2; }
        .title div { display: flex; justify-content: flex-end; gap: 24px; padding-right: 13px; grid-column: 3; }
        nav { display: flex; align-items: center; height: 24px; padding: 0 11px 0 9px; gap: 17px; }
        nav button:last-child { margin-left: auto; }
        .rule { height: 1px; background: #dcdcdc; margin-right: 24px; }
        .new { width: 33px; justify-content: center; }
        .combo {
          box-sizing: border-box;
          height: 34px;
          border: 1px solid #cdcdcd;
          border-radius: 5px;
          background: #fafafa;
          padding: 0 8px;
          font: inherit;
          color: #555;
        }
        .font { width: 240px; margin-left: 2px; font-style: italic; }
        .split { flex: 1; display: grid; grid-template-columns: 1fr 59px; min-height: 0; }
        .main { display: flex; flex-direction: column; min-width: 0; min-height: 0; }
        .formula { display: flex; align-items: center; height: 38px; padding: 0 0 1px 4px; }
        .formula .combo { width: 160px; flex: none; }
        .formula .line {
          flex: 1;
          box-sizing: border-box;
          height: 24px;
          margin: 0 4px 0 120px;
          border: 1px solid #c8c8c8;
          background: #fff;
        }
        .formula button { color: #555; padding-right: 7px; }
        .area { flex: 1; display: grid; grid-template-columns: 1fr 12px; min-height: 0; }
        .vbar { display: flex; flex-direction: column; align-items: center; }
        .vbar i { height: 5px; width: 12px; background: linear-gradient(#111, #111) 3px 2px / 6px 1px no-repeat #bbb; }
        .vbar b { width: 6px; height: 350px; margin-top: 5px; border-radius: 3px; background: #8a8a8a; }
        .hbar { display: flex; justify-content: space-between; height: 12px; margin-right: 12px; }
        .hbar b { width: 831px; height: 6px; margin: 3px 4px; border-radius: 3px; background: #8a8a8a; }
        .hbar i { width: 5px; height: 12px; background: linear-gradient(#111, #111) 2px 3px / 1px 6px no-repeat #bbb; }
      </style>
      <div class="title">
        <span>tuition_payment.xlsx - LibreOffice Calc</span>
        <div>
          <button aria-label="Minimize"><ui-icon name="min"></ui-icon></button>
          <button aria-label="Restore"><ui-icon name="restore"></ui-icon></button>
          <button aria-label="Close"><ui-icon name="close"></ui-icon></button>
        </div>
      </div>
      <nav>
        ${menus.map(m => `<button>${m}</button>`).join('')}
        <button aria-label="Close Document"><ui-icon name="close"></ui-icon></button>
      </nav>
      <div class="rule"></div>
      <tool-row items="pivot - omega v link comment headfoot - printrange freeze v split - brush">
        <button class="new" aria-label="New"><ui-icon name="sheet"></ui-icon></button>
        <button aria-label="More"><ui-icon name="drop"></ui-icon></button>
      </tool-row>
      <tool-row second items="- money v percent number date - decadd decdel - indent outdent - border n borderstyle n bordercolor v - cond v">
        <input class="combo font" aria-label="Font Name" value="思源黑">
      </tool-row>
      <div class="split">
        <div class="main">
          <div class="formula">
            <input class="combo" aria-label="Name Box" value="B20">
            <input class="line" aria-label="Formula">
            <button aria-label="Expand Formula Bar"><ui-icon name="chev"></ui-icon></button>
          </div>
          <info-bar action="Get involved">H</info-bar>
          <info-bar action="Donate">Y</info-bar>
          <div class="area">
            <sheet-grid></sheet-grid>
            <div class="vbar"><i></i><b></b></div>
          </div>
          <div class="hbar"><b></b><i></i></div>
          <sheet-tabs></sheet-tabs>
        </div>
        <side-deck></side-deck>
      </div>
      <calc-status></calc-status>
    `);
  }
}
customElements.define('calc-window', CalcWindow);

class AddressPill extends HTMLElement {
  constructor() {
    super();
    shadow(this, `
      <style>
        :host {
          position: relative;
          display: inline-flex;
          align-items: center;
          gap: 7px;
          height: 22px;
          padding: 0 6px 0 5px;
          border-radius: 3px;
          background: #e4e4e4;
          color: #444;
          white-space: nowrap;
        }
        :host([invalid]) { background: #d70022; color: #fff; }
        .dot {
          position: absolute;
          right: 0;
          top: 0;
          width: 4px;
          height: 4px;
          border: 2px solid #fff;
          border-width: 0 1px 2px 2px;
          border-radius: 50%;
          background: #333;
        }
      </style>
      <slot></slot>${this.hasAttribute('invalid') ? '<ui-icon name="warn"></ui-icon>' : '<span class="dot"></span>'}
    `);
  }
}
customElements.define('address-pill', AddressPill);

class FormatBar extends HTMLElement {
  constructor() {
    super();
    const tool = (name, more) => `<button aria-label="${name}"><ui-icon name="${name}"></ui-icon></button>` +
      (more ? `<button class="more" aria-label="${name} options"><ui-icon name="chevbold"></ui-icon></button>` : '');
    shadow(this, `
      <style>
        :host {
          box-sizing: border-box;
          display: flex;
          align-items: center;
          height: 39px;
          padding: 3px 0 0 5px;
          border-bottom: 1px solid #cfcfcf;
        }
        label { display: grid; align-items: center; margin-right: 4px; }
        select, label ui-icon { grid-area: 1 / 1; }
        label ui-icon { justify-self: end; margin-right: 5px; pointer-events: none; }
        select {
          appearance: none;
          box-sizing: border-box;
          width: 103px;
          height: 24px;
          padding: 0 9px;
          border: 1px solid #b4b4b4;
          border-radius: 3px;
          background: #fafafa;
          color: #222;
          font: inherit;
        }
        .wide { width: 130px; }
        .colors { width: 26px; height: 22px; margin: 0 5px 0 3px; display: grid; }
        .colors span { width: 18px; height: 15px; grid-area: 1 / 1; box-sizing: border-box; }
        .back { justify-self: end; align-self: end; border: 1px solid #aaa; background: #fff; }
        .fore { background: #000; }
        button {
          width: 26px;
          height: 24px;
          padding: 0;
          border: 0;
          background: none;
          display: grid;
          place-items: center;
          color: #3a3a3a;
        }
        .more { width: 11px; margin: 0 5px 0 -5px; }
        .text { font: 700 18px/20px "Noto Sans", sans-serif; }
        .it { font: italic 700 18px/20px "Liberation Mono", monospace; }
        .un { font: 600 16px/18px "Noto Sans", sans-serif; text-decoration: underline; }
        i { width: 1px; height: 18px; margin: 0 1px; background: #d0d0d0; }
      </style>
      <label><select aria-label="Paragraph format"><option>Paragraph</option></select><ui-icon name="chev"></ui-icon></label>
      <label><select class="wide" aria-label="Font"><option>Variable Width</option></select><ui-icon name="chev"></ui-icon></label>
      <div class="colors"><span class="back"></span><span class="fore"></span></div>
      ${tool('sizett')}${tool('smaller')}${tool('larger')}<i></i>
      <button class="text">B</button><button class="it">I</button><button class="un">U</button><i></i>
      ${tool('clearfmt')}<i></i>
      ${tool('ul')}${tool('ol')}${tool('fout')}${tool('fin')}<i></i>
      ${tool('align', true)}${tool('image', true)}${tool('smile', true)}
    `);
  }
}
customElements.define('format-bar', FormatBar);

class ComposeWindow extends HTMLElement {
  constructor() {
    super();
    const menus = ['<u>F</u>ile', '<u>E</u>dit', '<u>V</u>iew', '<u>I</u>nsert', 'F<u>o</u>rmat', 'O<u>p</u>tions', '<u>T</u>ools', '<u>H</u>elp'];
    shadow(this, `
      <style>
        :host {
          display: flex;
          flex-direction: column;
          background: #fafafa;
          border-radius: 10px 10px 0 0;
          box-shadow: 0 0 0 1px rgba(0,0,0,.3), 0 3px 18px 3px rgba(0,0,0,.45);
          overflow: hidden;
        }
        button { font: inherit; color: inherit; background: none; border: 0; padding: 0; display: flex; align-items: center; }
        u { text-underline-offset: 3px; }
        .title {
          display: grid;
          grid-template-columns: 1fr auto 1fr;
          align-items: center;
          height: 36px;
          background: #ebebeb;
          border-bottom: 1px solid #bdbdbd;
          font-weight: 700;
        }
        .title span { grid-column: 2; }
        .title div { grid-column: 3; display: flex; justify-content: flex-end; gap: 12px; padding-right: 7px; }
        .title button { width: 22px; height: 22px; border-radius: 50%; background: #dcdcdc; justify-content: center; color: #333; }
        nav { display: flex; gap: 15px; height: 27px; align-items: center; padding-left: 8px; }
        .bar {
          display: flex;
          align-items: center;
          height: 36px;
          padding: 0 10px 0 11px;
          border-bottom: 1px solid #cfcfcf;
          box-shadow: 0 1px 3px rgba(0,0,0,.08);
        }
        .bar button { gap: 3px; }
        .bar i { width: 1px; height: 18px; background: #ccc; margin: 0 6px 0 5px; }
        .bar .tall { height: 23px; margin: 0 10px 0 8px; }
        .bar .off { color: #b4b4b4; }
        .bar .next { margin-left: 17px; }
        .bar .end { margin-left: auto; gap: 5px; }
        .head { display: grid; grid-template-columns: 139px 1fr; column-gap: 10px; padding: 8px 8px 0 0; row-gap: 6px; }
        .head > label { text-align: right; line-height: 30px; }
        .head > .to { line-height: 32px; }
        .from { display: flex; align-items: center; height: 30px; color: #111; padding-left: 10px; }
        .from select { appearance: none; border: 0; background: none; padding: 0; font: inherit; color: inherit; field-sizing: content; }
        .from em { color: #777; margin: 0 15px 0 17px; }
        .from i { width: 1px; height: 14px; background: #bbb; margin: 0 18px 0 15px; }
        .from button { color: #3d3d3d; margin-right: 20px; }
        .pills {
          display: flex;
          flex-wrap: wrap;
          gap: 5px 3px;
          padding: 3px 4px;
          border: 1px solid #b4b4b4;
          border-radius: 3px;
          background: #fff;
        }
        .subject {
          box-sizing: border-box;
          width: 100%;
          height: 30px;
          padding: 0 4px;
          border: 1px solid #b4b4b4;
          border-radius: 3px;
          background: #fff;
          color: #111;
          font: inherit;
        }
        .editor {
          flex: 1;
          padding: 8px;
          background: #fff;
          color: #000;
          font: 16px/19px "DejaVu Sans", sans-serif;
        }
        .editor p { margin: 0 0 16px; }
        .bad { text-decoration: underline wavy #f00 1px; text-decoration-skip-ink: none; text-underline-offset: 1px; }
        .caret { display: inline-block; width: 1px; height: 19px; background: #000; vertical-align: top; }
        footer { height: 22px; border-top: 1px solid #cfcfcf; }
      </style>
      <div class="title">
        <span>Write: Reminder of Payment - Thunderbird</span>
        <div>
          <button aria-label="Minimize"><ui-icon name="min"></ui-icon></button>
          <button aria-label="Maximize"><ui-icon name="max"></ui-icon></button>
          <button aria-label="Close"><ui-icon name="close"></ui-icon></button>
        </div>
      </div>
      <nav>${menus.map(m => `<button>${m}</button>`).join('')}</nav>
      <div class="bar">
        <button><ui-icon name="send"></ui-icon>Send</button>
        <i class="tall"></i>
        <button class="off" disabled><ui-icon name="encrypt"></ui-icon>Encrypt</button>
        <button class="next"><ui-icon name="spell"></ui-icon>Spelling</button><i></i>
        <button aria-label="Spelling options"><ui-icon name="chev"></ui-icon></button>
        <button class="next"><ui-icon name="save"></ui-icon>Save</button><i></i>
        <button aria-label="Save options"><ui-icon name="chev"></ui-icon></button>
        <button class="next"><ui-icon name="contacts"></ui-icon>Contacts</button>
        <button class="end"><ui-icon name="attach"></ui-icon>Attach</button><i></i>
        <button aria-label="Attach options"><ui-icon name="chev"></ui-icon></button>
      </div>
      <div class="head">
        <label for="from">F<u>r</u>om</label>
        <div class="from">
          <select id="from"><option>Anonym Tester &lt;anonym-x2024@outlook.com&gt;</option></select>
          <em>anonym-x2024@outlook.com</em>
          <ui-icon name="chev"></ui-icon>
          <i></i>
          <button>Cc</button><button>Bcc</button><button aria-label="More fields"><ui-icon name="more"></ui-icon></button>
        </div>
        <label class="to">To</label>
        <div class="pills">
          <address-pill>fox@someuniversity.edu</address-pill>
          <address-pill>iron@someuniversity.edu</address-pill>
          <address-pill invalid>mike@someuniversity.edunancy@someuniversity.edu</address-pill>
          <address-pill>stella@someuniversity.edu</address-pill>
        </div>
        <label for="subject"><u>S</u>ubject</label>
        <input class="subject" id="subject" value="Reminder of Payment">
      </div>
      <format-bar></format-bar>
      <div class="editor" role="textbox" aria-label="Message">
        <p>Hello, Everyone,</p>
        <p>&nbsp;&nbsp;&nbsp;&nbsp;&nbsp;&nbsp;&nbsp; This is a kind reminder of payment of <span class="bad">new-cemester</span> tuition. Up to sending this e-mail, we haven't received your tuition. Please finish your payment as soon as possible before the deadline.</p>
        <p>Regards,</p>
        <p>Anonymnancy@someuniversity.edunancy@someuniversity.edu<span class="caret"></span></p>
      </div>
      <footer></footer>
    `);
  }
}
customElements.define('compose-window', ComposeWindow);

class DeskTop extends HTMLElement {
  constructor() {
    super();
    shadow(this, `
      <style>
        :host {
          position: relative;
          display: grid;
          grid-template: auto minmax(0, 1fr) / 70px minmax(0, 1fr);
          height: 100vh;
          overflow: hidden;
        }
        top-panel { grid-column: 1 / -1; }
        compose-window {
          position: absolute;
          left: 120px;
          top: 77px;
          width: 860px;
          bottom: 166px;
        }
        .pointer { position: absolute; left: 770px; top: 537px; }
      </style>
      <top-panel></top-panel>
      <app-dock></app-dock>
      <calc-window></calc-window>
      <compose-window></compose-window>
      <ui-icon class="pointer" name="ibeam"></ui-icon>
    `);
  }
}
customElements.define('desk-top', DeskTop);
</script>
</body>
</html>
